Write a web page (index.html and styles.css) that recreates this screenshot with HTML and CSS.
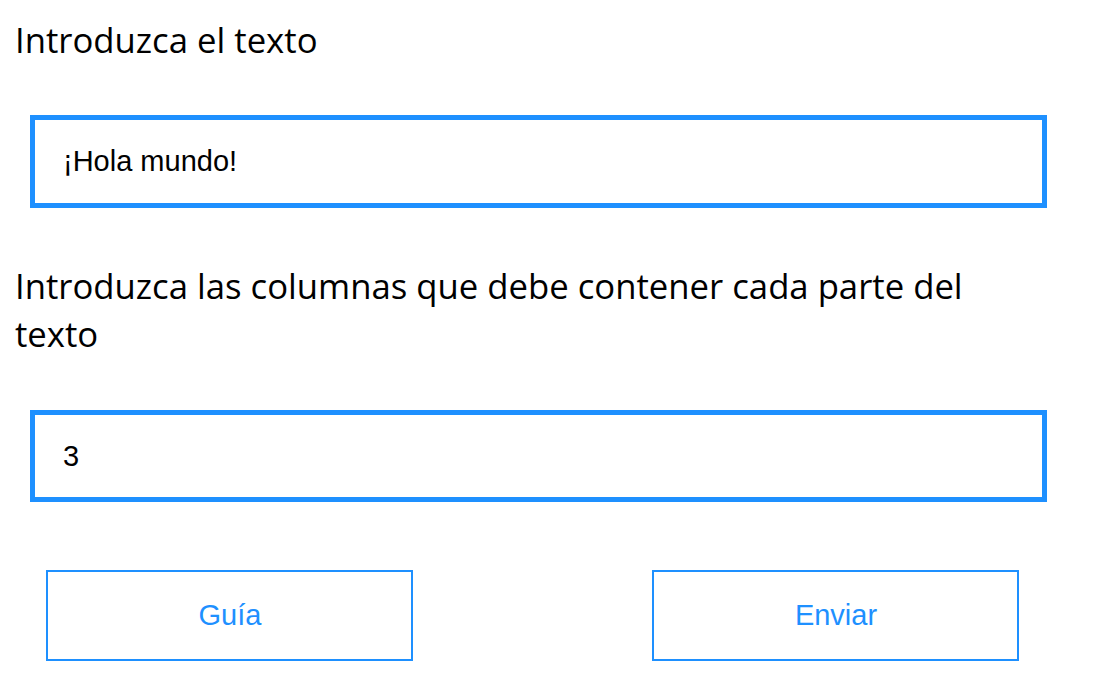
FILE: index.html
```html
<!DOCTYPE html>
<html lang="es">
<head>
<meta charset="utf-8">
<title>Columnas</title>
<link rel="stylesheet" href="styles.css">
</head>
<body>
<main class="form">
  <label class="label" for="texto">Introduzca el texto</label>
  <div class="field">
    <input class="input" id="texto" type="text" value="¡Hola mundo!">
  </div>
  <label class="label label-two" for="cols">Introduzca las columnas que debe contener cada parte del texto</label>
  <div class="field field-two">
    <input class="input input-two" id="cols" type="text" value="3">
  </div>
  <div class="actions">
    <button class="btn" type="button">Guía</button>
    <button class="btn" type="button">Enviar</button>
  </div>
</main>
</body>
</html>
```

FILE: styles.css
```css
html, body {
  margin: 0;
  padding: 0;
  background: #ffffff;
}
.form {
  display: flex;
  flex-direction: column;
  padding: 16px 0 0 15px;
  width: 1032px;
}
.label {
  display: block;
  font-family: "Open Sans", "Noto Sans", sans-serif;
  font-size: 34.7px;
  line-height: 48px;
  color: #000;
  max-width: 1000px;
}
.label-two {
  margin-top: 54px;
}
.field {
  margin-top: 51px;
  padding-left: 15px;
}
.field-two {
  margin-top: 52px;
}
.input {
  box-sizing: border-box;
  display: block;
  width: 1017px;
  height: 93px;
  border: 5px solid #1e90ff;
  padding: 0 0 0 28px;
  margin: 0;
  font-family: "Liberation Sans", Arial, sans-serif;
  font-size: 29px;
  color: #000;
  outline: none;
  background: #fff;
}
.input-two {
  height: 92px;
}
.actions {
  display: flex;
  justify-content: space-between;
  margin-top: 68px;
  padding: 0 28px 0 31px;
}
.btn {
  box-sizing: border-box;
  width: 367px;
  height: 91px;
  border: 2px solid #1e90ff;
  background: #fff;
  color: #1e90ff;
  font-family: "Liberation Sans", Arial, sans-serif;
  font-size: 29px;
  padding: 0 0 0 1px;
  cursor: pointer;
}
```
